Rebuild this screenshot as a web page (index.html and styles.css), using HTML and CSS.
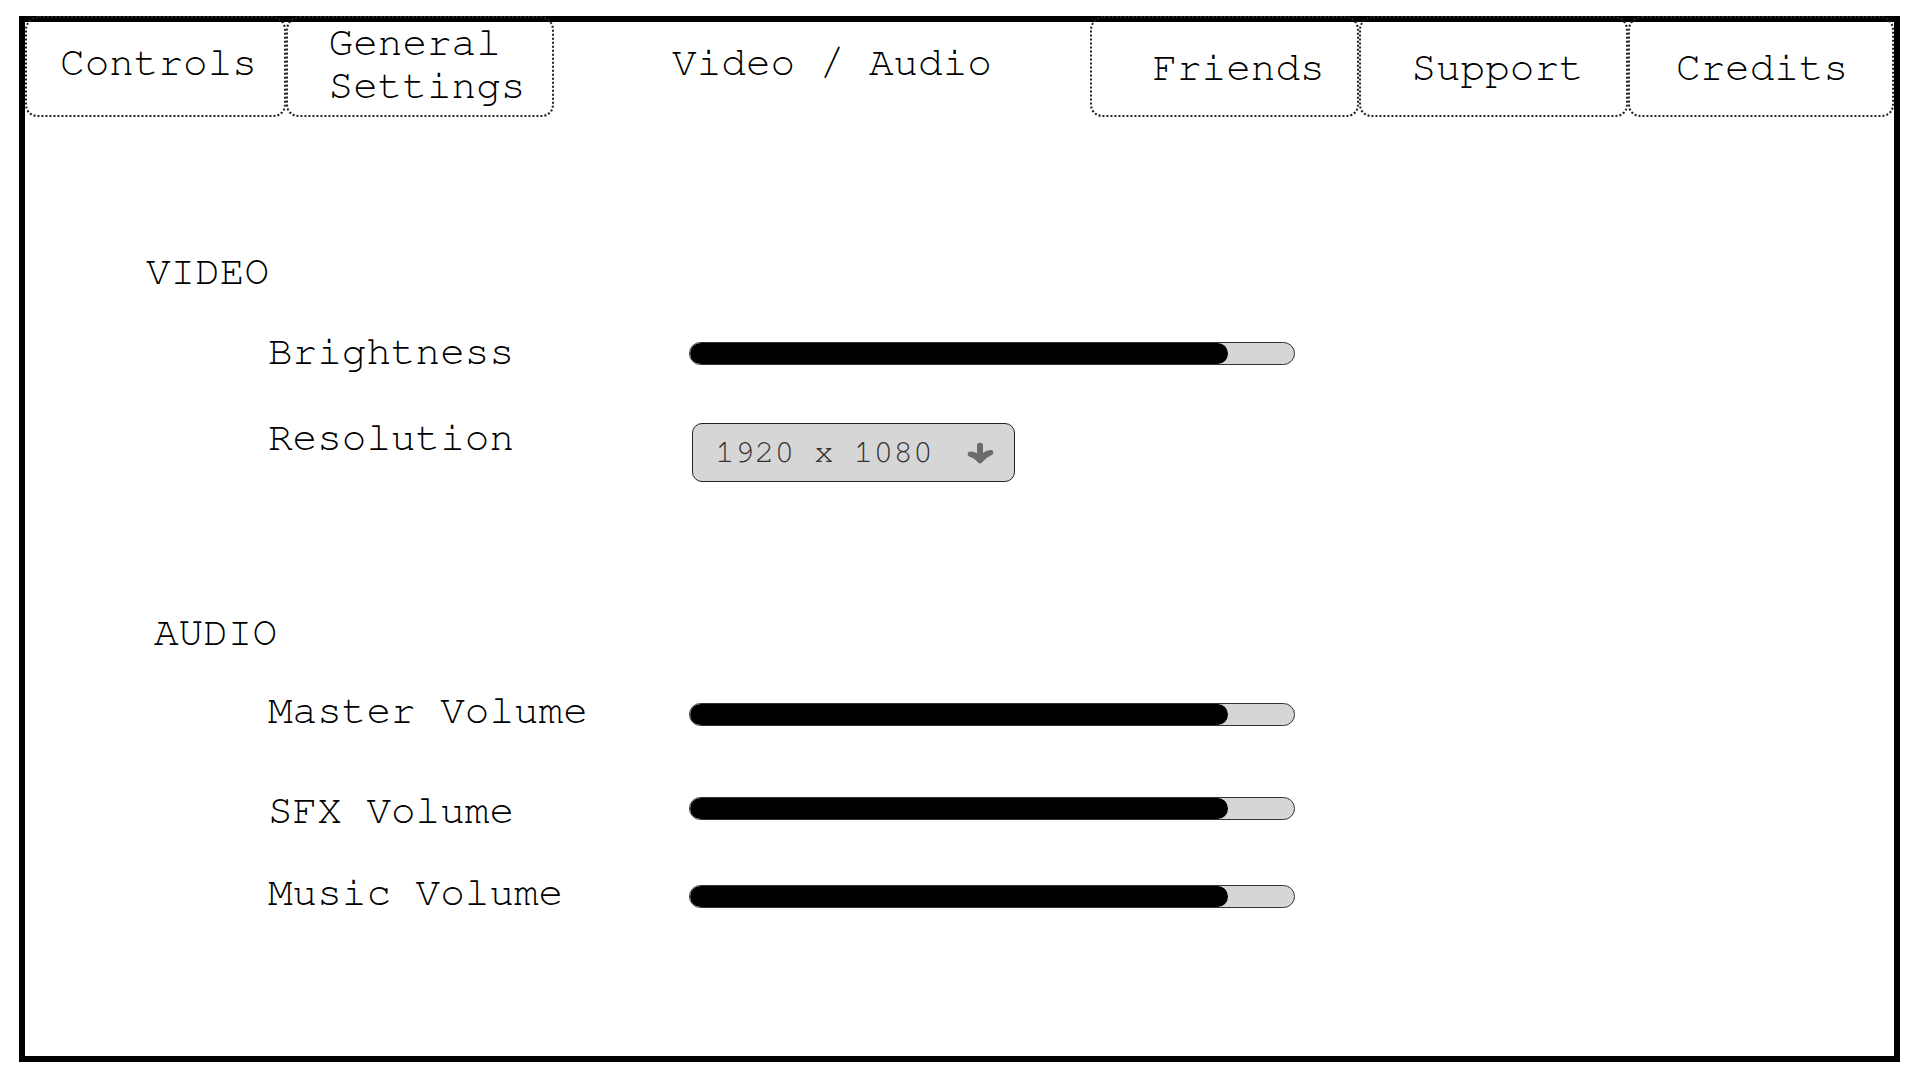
FILE: index.html
```html
<!DOCTYPE html>
<html lang="en">
<head>
    <meta charset="UTF-8">
    <meta name="viewport" content="width=device-width, initial-scale=1.0">
    <title>Settings - Video / Audio</title>
    <link rel="stylesheet" href="styles.css">
</head>
<body>
    <div class="window">
        <nav class="tabs">
            <div class="tab tab-controls">Controls</div>
            <div class="tab tab-general"><span>General<br>Settings</span></div>
            <div class="tab tab-active">Video / Audio</div>
            <div class="tab tab-low tab-friends">Friends</div>
            <div class="tab tab-low tab-support">Support</div>
            <div class="tab tab-low tab-credits">Credits</div>
        </nav>

        <main class="settings">
            <h2 class="section-title">VIDEO</h2>

            <div class="setting-row row-brightness">
                <span class="setting-label">Brightness</span>
                <div class="slider"><div class="slider-fill" style="width: 89%;"></div></div>
            </div>

            <div class="setting-row row-resolution">
                <span class="setting-label">Resolution</span>
                <div class="dropdown">
                    <span>1920 x 1080</span>
                    <svg class="dropdown-arrow" width="27" height="22" viewBox="0 0 27 22">
                        <path d="M10 2 Q13 -0.5 16 2 L16 11 Q20 7.5 25 8 Q27.5 10 25.5 12.5 Q19 15.5 15 20.5 Q13 22.5 11 20.5 Q7.5 16 2 14.5 Q-0.5 12.5 1.5 10 Q6 8.5 10 11.5 Z" fill="#6c6c6c"/>
                    </svg>
                </div>
            </div>

            <h2 class="section-title section-audio">AUDIO</h2>

            <div class="setting-row row-master">
                <span class="setting-label">Master Volume</span>
                <div class="slider"><div class="slider-fill" style="width: 89%;"></div></div>
            </div>

            <div class="setting-row row-sfx">
                <span class="setting-label">SFX Volume</span>
                <div class="slider"><div class="slider-fill" style="width: 89%;"></div></div>
            </div>

            <div class="setting-row row-music">
                <span class="setting-label">Music Volume</span>
                <div class="slider"><div class="slider-fill" style="width: 89%;"></div></div>
            </div>
        </main>
    </div>
</body>
</html>
```

FILE: styles.css
```css
/* General Styles */
body {
    margin: 0;
    padding: 0;
    font-family: 'Nimbus Mono PS', 'FreeMono', 'Courier 10 Pitch', 'Liberation Mono', monospace;
    background-color: #fff;
    color: #000;
}

/* Window Frame */
.window {
    box-sizing: border-box;
    width: 1881px;
    height: 1046px;
    margin: 16px 0 0 19px;
    border: 6px solid #000;
    display: flex;
    flex-direction: column;
}

/* Tabs */
.tabs {
    display: flex;
    height: 101px;
    margin-top: -6px;
}

.tab {
    flex: none;
    box-sizing: border-box;
    display: flex;
    align-items: center;
    justify-content: center;
    padding-bottom: 9px;
    border: 2px dotted #222;
    border-radius: 14px 14px 12px 12px;
    font-size: 41px;
    line-height: 43px;
    white-space: nowrap;
}

.tab-controls {
    width: 261px;
    padding-left: 6px;
}

.tab-general {
    width: 268px;
    padding-left: 14px;
    padding-bottom: 5px;
}

.tab-general span {
    text-align: left;
}

.tab-active {
    width: 536px;
    border-color: transparent;
    padding-left: 20px;
}

.tab-low {
    padding-bottom: 0;
    padding-top: 2px;
}

.tab-friends {
    width: 269px;
    padding-left: 28px;
}

.tab-support {
    width: 269px;
    padding-left: 8px;
}

.tab-credits {
    width: 266px;
    padding-left: 2px;
}

/* Settings Content */
.settings {
    padding: 135px 0 0 121px;
}

.section-title {
    margin: 0;
    font-size: 41px;
    font-weight: normal;
    line-height: 40px;
}

.section-audio {
    margin-top: 131px;
    padding-left: 8px;
}

.setting-row {
    display: flex;
    align-items: center;
    height: 40px;
    padding-left: 122px;
}

.setting-label {
    flex: none;
    width: 421px;
    font-size: 41px;
    line-height: 40px;
}

.row-brightness { margin-top: 41px; }
.row-brightness .setting-label { margin-bottom: 2px; }

.row-resolution {
    margin-top: 50px;
    height: 59px;
    align-items: flex-start;
}
.row-resolution .setting-label { margin-top: -5px; }

.row-master { margin-top: 41px; }
.row-master .setting-label { margin-bottom: 7px; }

.row-sfx { margin-top: 54px; }
.row-sfx .setting-label { margin-top: 5px; }

.row-music { margin-top: 48px; }
.row-music .setting-label { margin-bottom: 7px; }

/* Slider */
.slider {
    flex: none;
    box-sizing: border-box;
    width: 606px;
    height: 23px;
    border: 1px solid #333;
    border-radius: 12px;
    background-color: #d6d6d6;
    overflow: hidden;
}

.slider-fill {
    height: 100%;
    background-color: #000;
    border-radius: 12px;
}

/* Dropdown */
.dropdown {
    flex: none;
    box-sizing: border-box;
    width: 323px;
    height: 59px;
    margin-left: 3px;
    padding: 0 20px 0 22px;
    display: flex;
    align-items: center;
    justify-content: space-between;
    border: 1px solid #222;
    border-radius: 10px;
    background-color: #d6d6d6;
    color: #333;
    font-size: 33px;
}

.dropdown-arrow {
    flex-shrink: 0;
}
```
